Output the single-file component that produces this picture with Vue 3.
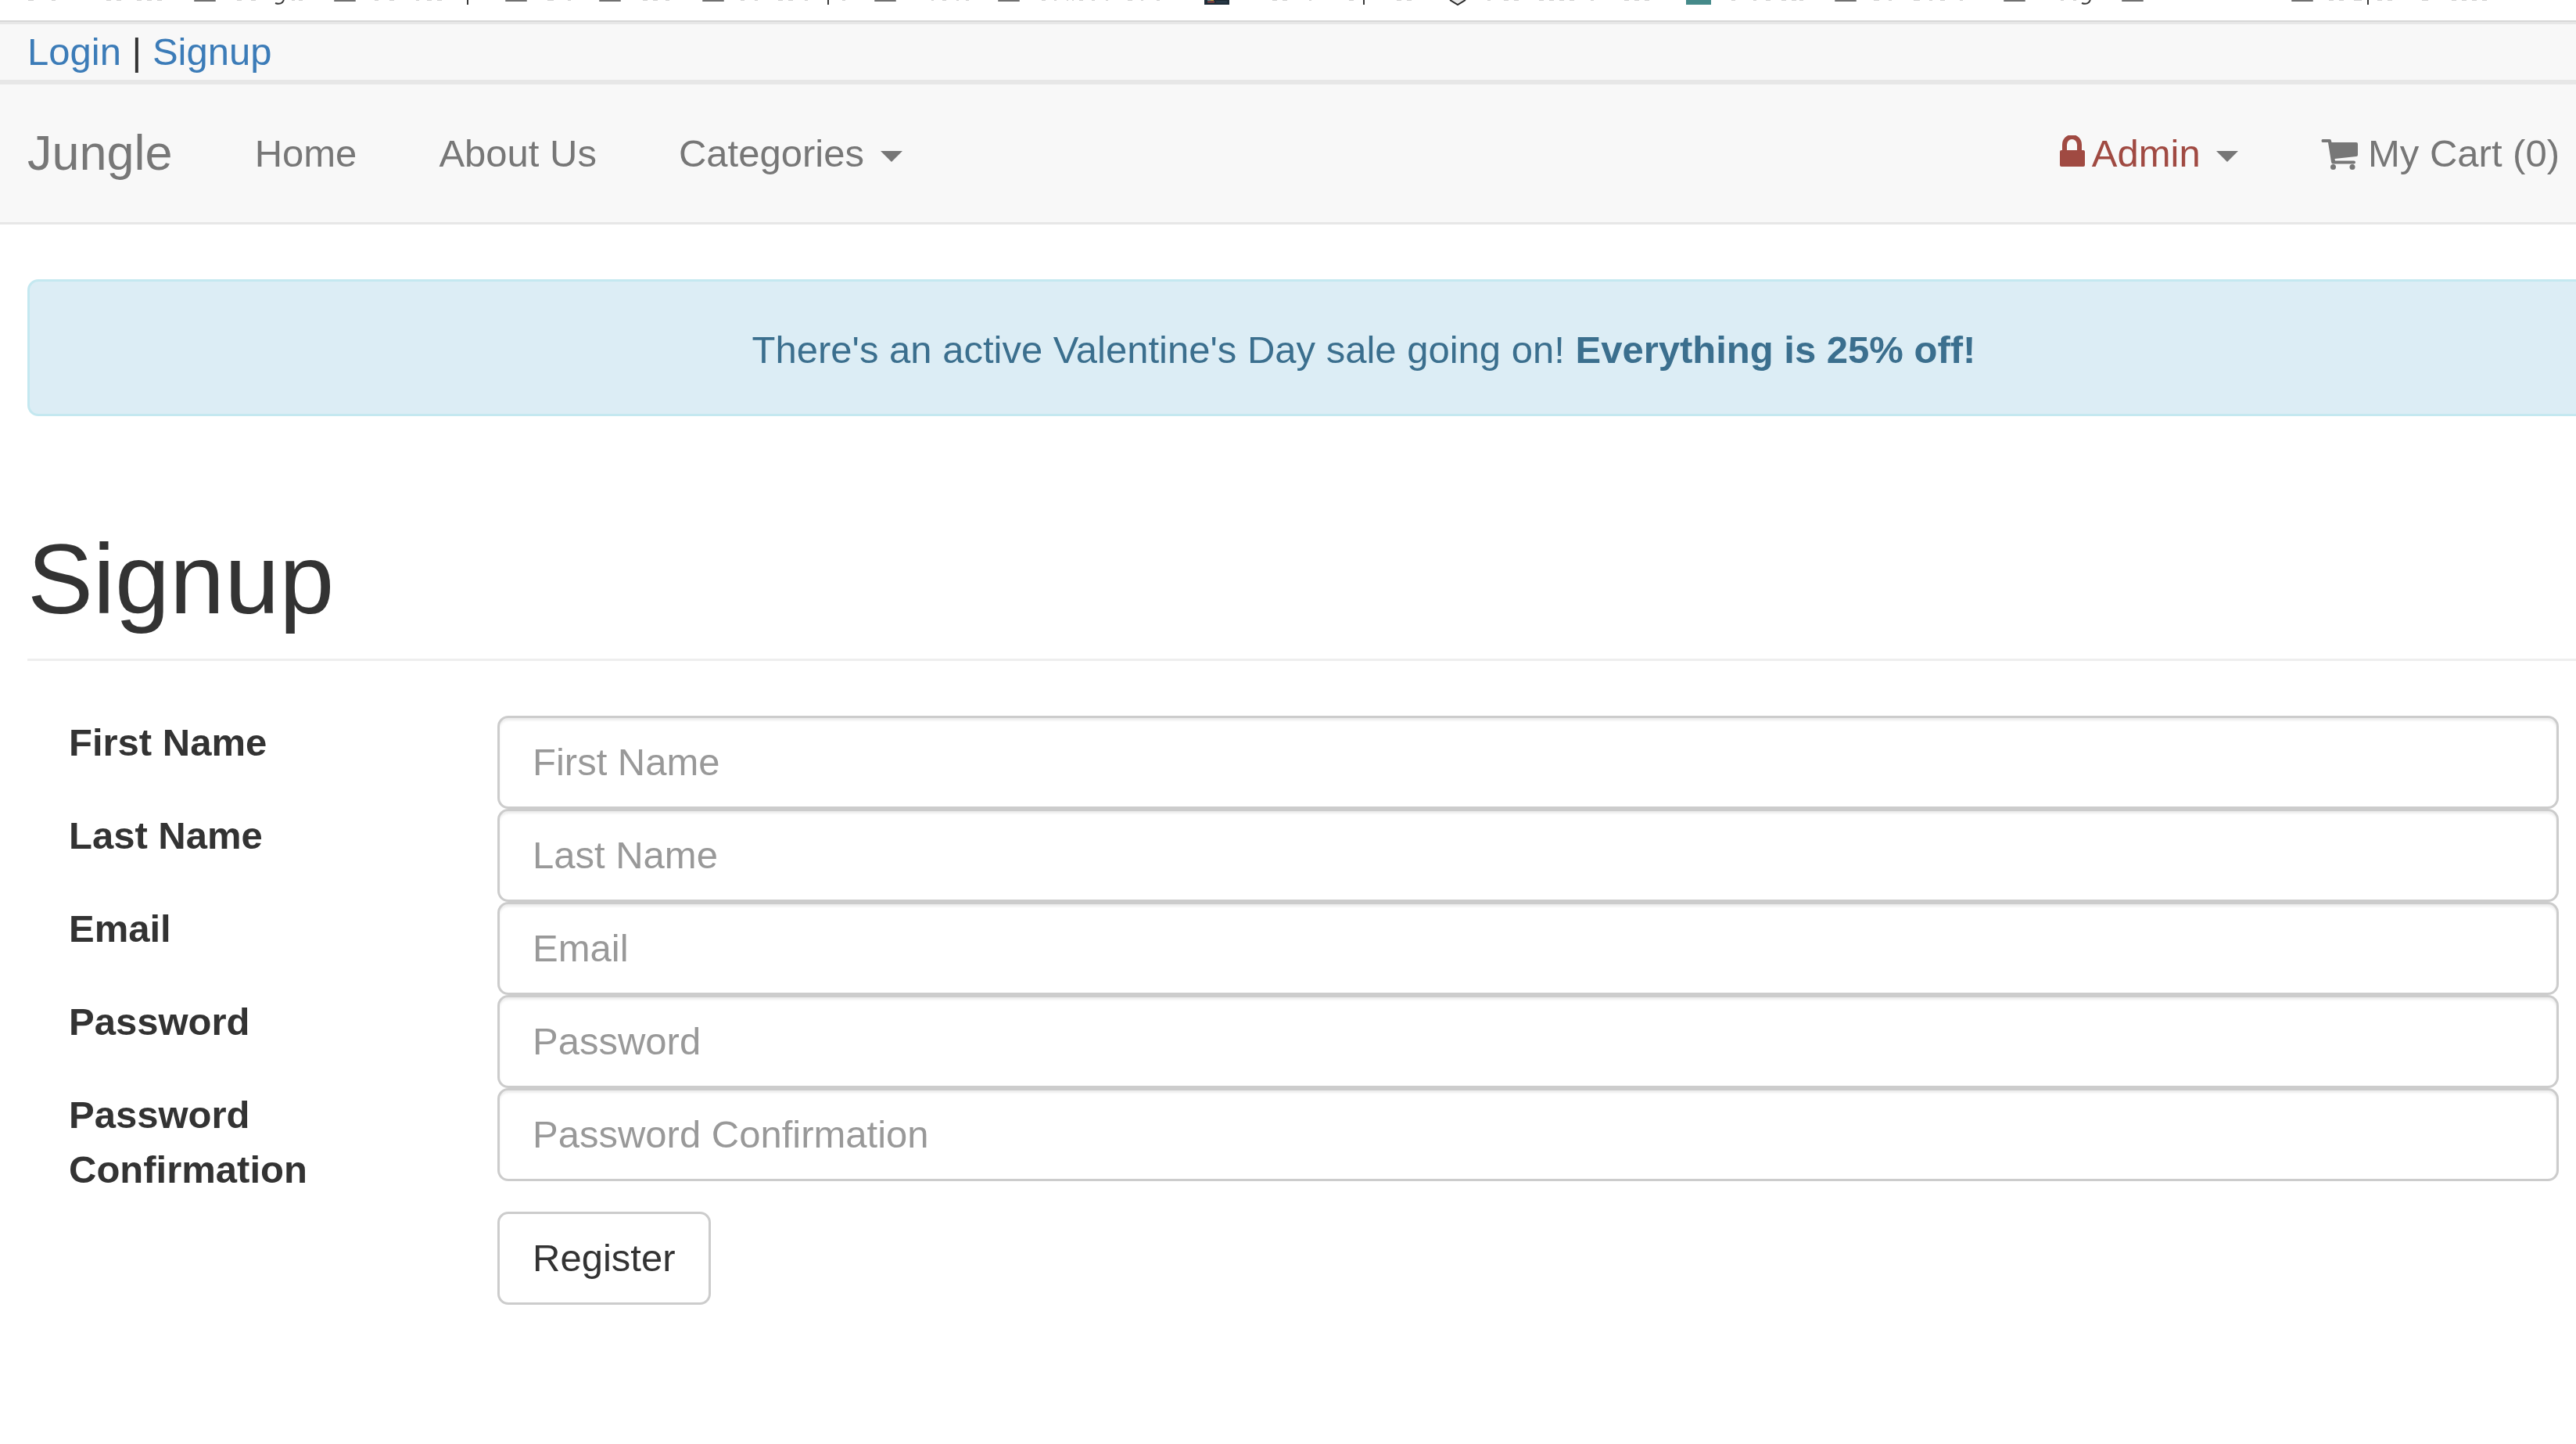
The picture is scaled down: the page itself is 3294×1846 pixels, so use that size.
<script setup>
const iconStubs = [248, 427, 646, 766, 898, 1118, 1276, 2346, 2562, 2713, 2930]
const rawDashes = [
  [36,7],[66,5],[136,19],[175,32],[303,6],[321,6],[373,4],[382,5],[479,5],[498,6],[532,4],[546,15],
  [700,8],[726,4],[822,14],[851,5],[947,5],[965,4],[995,20],[1029,4],[1077,4],
  [1191,3],[1205,5],[1223,3],[1235,4],[1332,5],[1348,3],[1364,2],[1371,2],[1380,5],[1396,4],[1414,3],[1442,6],[1459,3],[1479,4],
  [1627,14],[1674,3],[1725,6],[1786,21],[1902,4],[1923,18],[1968,41],[2034,4],[2077,32],
  [2214,5],[2242,4],[2258,6],[2278,14],[2301,5],[2396,7],[2415,4],[2447,8],[2467,4],[2481,6],[2506,4],[2635,4],[2651,4],
  [2978,20],[3010,10],[3040,20],[3097,8],[3135,42]
]
const dashes = rawDashes.flatMap(([x, w]) => {
  if (w <= 12) return [[x, w]]
  const parts = []
  for (let p = x; p < x + w; p += 13) parts.push([p, 6])
  return parts
})
const stems = [597, 1058, 1743, 3027]
const hooks = [352, 2662]
const fields = [
  { label: 'First Name', type: 'text' },
  { label: 'Last Name', type: 'text' },
  { label: 'Email', type: 'email' },
  { label: 'Password', type: 'password' },
  { label: 'Password Confirmation', type: 'password' }
]
</script>

<template>
  <div class="page">
    <svg class="strip" width="3294" height="26" viewBox="0 0 3294 26" aria-hidden="true">
      <rect v-for="d in dashes" :key="'d' + d[0]" :x="d[0]" y="0" :width="d[1]" height="1" fill="#d0d0d0" />
      <rect v-for="x in iconStubs" :key="'i' + x" :x="x" y="0" width="28" height="2" rx="1" fill="#707070" />
      <rect v-for="x in stems" :key="'s' + x" :x="x" y="0" width="2" height="6" fill="#3a3a3a" />
      <path v-for="x in hooks" :key="'h' + x" :d="`M${x} 4 Q${x + 6} 6 ${x + 9} 3 L${x + 11} 0`" fill="none" stroke="#3a3a3a" stroke-width="2" />
      <rect x="1540" y="0" width="32" height="6" fill="#1e2d38" />
      <rect x="1544" y="0" width="8" height="1" fill="#7f8f8f" />
      <rect x="1548" y="0" width="4" height="1" fill="#d9a441" />
      <rect x="1544" y="2" width="9" height="1" fill="#d9534f" />
      <rect x="1555" y="2" width="14" height="1" fill="#34495a" />
      <path d="M1854 0 L1864 6 L1874 0" fill="#e8e8e8" stroke="#2c2c2c" stroke-width="2" />
      <rect x="2156" y="0" width="32" height="6" fill="#458a8a" />
    </svg>

    <div class="account-bar">
      <a class="link">Login</a> | <a class="link">Signup</a>
    </div>

    <nav class="navbar">
      <a class="brand">Jungle</a>
      <a class="nav-item">Home</a>
      <a class="nav-item">About Us</a>
      <a class="nav-item">Categories <span class="caret"></span></a>
      <div class="nav-right">
        <a class="nav-item admin">
          <svg class="icon lock" width="49" height="49" viewBox="0 0 49 49" aria-hidden="true">
            <path d="M10 20 V12 A9.5 10 0 0 1 29 12 V20" fill="none" stroke="currentColor" stroke-width="6" />
            <rect x="4" y="19" width="32" height="21" rx="2" fill="currentColor" />
          </svg><span class="admin-text">Admin</span> <span class="caret"></span>
        </a>
        <a class="nav-item cart">
          <svg class="icon" width="49" height="49" viewBox="0 0 49 49" aria-hidden="true">
            <path fill="currentColor" d="M3 5 H12 Q14 5 14 7 L14.5 9 H46 Q48 9 48 11 V25 Q48 27 46 27 L18.5 30 L19 32.500 H43 Q45 32.500 45 34.500 Q45 36.500 43 36.500 H16 Q14.500 36.500 14 34 L10 9 H3 Q1.500 9 1.500 7 Q1.500 5 3 5 Z" />
            <circle cx="16.500" cy="40.500" r="3.500" fill="currentColor" />
            <circle cx="41" cy="40.500" r="3.500" fill="currentColor" />
          </svg> My Cart (0)
        </a>
      </div>
    </nav>

    <main class="content">
      <div class="alert">There's an active Valentine's Day sale going on! <strong>Everything is 25% off!</strong></div>

      <div class="page-header">
        <h1>Signup</h1>
      </div>

      <form class="form" @submit.prevent>
        <div v-for="f in fields" :key="f.label" class="row">
          <label class="label">{{ f.label }}</label>
          <input class="input" :type="f.type" :placeholder="f.label" />
        </div>
        <div class="row actions">
          <span class="label"></span>
          <button class="btn" type="submit">Register</button>
        </div>
      </form>
    </main>
  </div>
</template>

<style scoped>
.page {
  width: 3294px;
  height: 1846px;
  overflow: hidden;
  background: #fff;
  font-family: "Liberation Sans", Arial, sans-serif;
  font-size: 49px;
  line-height: 70px;
  color: #333;
}
.strip {
  display: block;
}
.account-bar {
  height: 82px;
  box-sizing: border-box;
  padding-left: 35px;
  background: #f8f8f8;
  border-top: 5px solid #e7e7e7;
  border-bottom: 6px solid #e7e7e7;
  position: relative;
}
.account-bar::before {
  content: "";
  position: absolute;
  left: 0;
  right: 0;
  top: -5px;
  height: 2px;
  background: #d8d8d8;
}
.link {
  color: #3c7cb8;
}
.navbar {
  display: flex;
  align-items: center;
  height: 179px;
  box-sizing: border-box;
  padding-left: 35px;
  background: #f8f8f8;
  border-bottom: 3px solid #e7e7e7;
  color: #777;
}
.brand {
  font-size: 63px;
  line-height: 70px;
  margin-right: 52.5px;
  margin-top: -3px;
}
.nav-item {
  padding: 0 52.5px;
  white-space: nowrap;
}
.nav-right {
  margin-left: auto;
  display: flex;
  align-items: center;
}
.nav-right .cart {
  padding-right: 21px;
}
.admin {
  color: #777;
}
.admin .icon,
.admin-text {
  color: #a04a42;
}
.icon {
  display: inline-block;
  vertical-align: -9px;
  margin-right: -2px;
}
.icon.lock {
  margin-left: 2px;
  margin-right: -4px;
}
.caret {
  display: inline-block;
  width: 0;
  height: 0;
  margin-left: 7px;
  vertical-align: middle;
  border-top: 14px solid #777;
  border-left: 14px solid transparent;
  border-right: 14px solid transparent;
}
.content {
  padding-left: 35px;
}
.alert {
  width: 3418px;
  height: 175px;
  box-sizing: border-box;
  margin-top: 70px;
  border: 3px solid #c4e8f0;
  border-radius: 14px;
  background: #dcedf5;
  color: #3b6f8e;
  text-align: center;
  line-height: 175px;
}
.page-header {
  width: 3416px;
  margin-top: 139px;
  padding-bottom: 32px;
  border-bottom: 3px solid #eee;
}
h1 {
  margin: 0;
  font-size: 126px;
  line-height: 139px;
  font-weight: 400;
  color: #333;
}
.form {
  padding-top: 70px;
  padding-left: 53px;
}
.row {
  display: flex;
  align-items: flex-start;
}
.label {
  flex: 0 0 495px;
  width: 495px;
  margin-right: 53px;
  margin-top: -1px;
  padding-bottom: 1px;
  font-weight: 700;
}
.input {
  display: block;
  width: 2636px;
  height: 119px;
  box-sizing: border-box;
  padding: 0 42px 1px;
  border: 3px solid #ccc;
  border-radius: 14px;
  background: #fff;
  box-shadow: inset 0 3px 3px rgba(0, 0, 0, 0.075);
  font: inherit;
  color: #555;
  outline: none;
}
.input::placeholder {
  color: #999;
  opacity: 1;
}
.actions {
  margin-top: 18px;
}
.btn {
  height: 119px;
  box-sizing: border-box;
  padding: 0 43px 2px 42px;
  border: 3px solid #ccc;
  border-radius: 14px;
  background: #fff;
  font: inherit;
  color: #333;
}
</style>

<style>
html, body {
  margin: 0;
  overflow: hidden;
  background: #fff;
}
</style>
